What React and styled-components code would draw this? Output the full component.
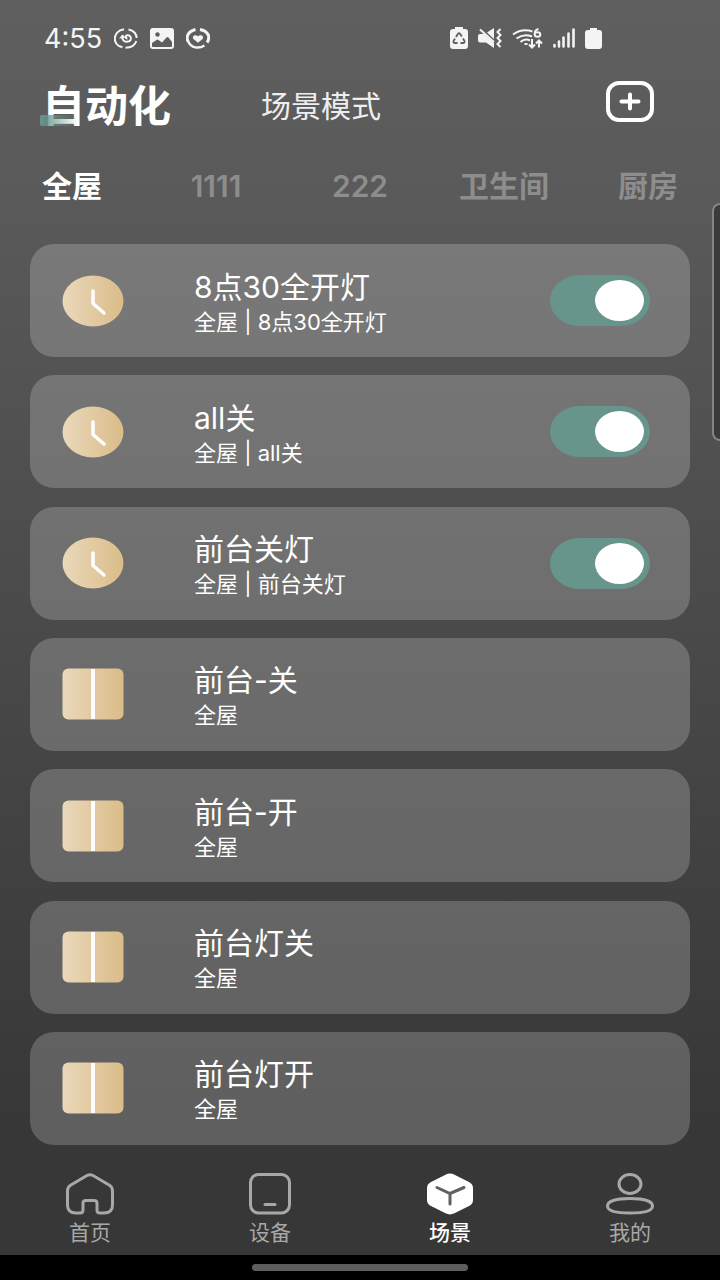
import React, { useState } from 'react';
import styled, { createGlobalStyle } from 'styled-components';

const rooms = ['全屋', '1111', '222', '卫生间', '厨房'];

const scenes = [
  { id: 1, name: '8点30全开灯', detail: '全屋 | 8点30全开灯', timed: true },
  { id: 2, name: 'all关', detail: '全屋 | all关', timed: true },
  { id: 3, name: '前台关灯', detail: '全屋 | 前台关灯', timed: true },
  { id: 4, name: '前台-关', detail: '全屋' },
  { id: 5, name: '前台-开', detail: '全屋' },
  { id: 6, name: '前台灯关', detail: '全屋' },
  { id: 7, name: '前台灯开', detail: '全屋' },
];

const IcHome = () => (
  <svg width='48' height='42' viewBox='0 0 48 42' fill='none' stroke='currentColor' strokeWidth='3'>
    <path d='M21 2.5Q24 .8 27 2.5L43.5 12.2Q46.5 14 46.5 18V32Q46.5 40 38 40H34Q31 40 31 37V30Q31 27.5 28 27.5H20Q17 27.5 17 30V37Q17 40 14 40H10Q1.5 40 1.5 32V18Q1.5 14 4.5 12.2Z' />
  </svg>
);

const IcDevice = () => (
  <svg width='42' height='42' viewBox='0 0 42 42' fill='none' stroke='currentColor' strokeWidth='3'>
    <rect x='1.5' y='1.5' width='39' height='38.5' rx='8' />
    <path d='M16 31.5H26' strokeLinecap='round' />
  </svg>
);

const IcScene = () => (
  <svg width='46' height='42' viewBox='0 0 46 42' fill='none'>
    <path
      d='M18.5 1.7Q23-.5 27.5 1.7L42 9Q46 11 46 15V27Q46 31 42 33L27.5 40.3Q23 42.5 18.5 40.3L4 33Q0 31 0 27V15Q0 11 4 9Z'
      fill='currentColor'
    />
    <path d='M10 14.5L23 20.5L37 14.5M23 20.5V31' stroke='#606060' strokeWidth='3' strokeLinecap='round' />
  </svg>
);

const IcMine = () => (
  <svg width='48' height='42' viewBox='0 0 48 42' fill='none' stroke='currentColor' strokeWidth='3'>
    <ellipse cx='24' cy='11' rx='11' ry='9.5' />
    <path d='M24 25.5C37 25.5 46.5 28 46.5 33S37 40 24 40S1.5 38 1.5 33S11 25.5 24 25.5Z' />
  </svg>
);

const menus = [
  { label: '首页', Icon: IcHome },
  { label: '设备', Icon: IcDevice },
  { label: '场景', Icon: IcScene },
  { label: '我的', Icon: IcMine },
];

const StatusBar = () => (
  <StStatusBar>
    <StTime>4:55</StTime>
    <svg width='24' height='21' viewBox='0 0 24 21' fill='none' stroke='currentColor' strokeWidth='2'>
      <path d='M10 1.3C-2 3.5-2 17 8.5 19.3M14.5 1.4C19.5 2.5 22.5 6 22.7 10M11.5 19.7C17 19.7 21 17.5 22.3 13' />
      <path d='M8.5 7.5C8 11.5 9.5 14 13 13.8C18.5 13.3 17.8 7 13.5 7.3C10.8 7.7 11 10.5 13.5 10.5' />
      <path d='M5 10.5L8.5 6.5L11.5 9.5Z' fill='currentColor' stroke='none' />
    </svg>
    <svg width='24' height='21' viewBox='0 0 24 21'>
      <path
        fill='currentColor'
        fillRule='evenodd'
        d='M3 0H21Q24 0 24 3V18Q24 21 21 21H3Q0 21 0 18V3Q0 0 3 0ZM2 15V18Q2 19 3 19H21Q22 19 22 18V14L18.5 9.5Q17.5 8.5 16.5 9.5L12 14.5L8.5 12Q7.5 11.2 6.5 12Z'
      />
      <circle cx='7.5' cy='6.5' r='2.2' fill='#5e5e5e' />
    </svg>
    <svg width='24' height='21' viewBox='0 0 24 21' fill='none' stroke='currentColor'>
      <path d='M9.5 1.5C1.5 3.5 0 9 2 13.5M14 1.5C22 3 25 9 21 14.5' strokeWidth='3' />
      <path d='M2 13C5 20.5 13 21 18.5 17.5' strokeWidth='2.5' />
      <path
        d='M12 14.8L7.5 11C5.5 8.5 9 5.5 12 8.2C15 5.5 18.5 8.5 16.5 11Z'
        fill='currentColor'
        stroke='none'
      />
    </svg>
    <StSystemIcons>
      <svg width='18' height='22' viewBox='0 0 18 22'>
        <path d='M5 0H13V2H15Q18 2 18 5V19Q18 22 15 22H3Q0 22 0 19V5Q0 2 3 2H5Z' fill='currentColor' />
        <path
          d='M6 10L8 6.8Q9 5.5 10 6.8L11.8 9.5M13 11.5L14.5 14Q15 16 13 16H10.5M7.5 16H5Q3 16 3.5 14L5 11.5'
          fill='none'
          stroke='#5e5e5e'
          strokeWidth='1.8'
        />
      </svg>
      <svg width='24' height='21' viewBox='0 0 24 21' fill='none' stroke='currentColor' strokeWidth='2'>
        <path d='M2 6H6L16 15V20L8 14.5H2Q0 14.5 0 12.5V8Q0 6 2 6ZM9 4.5L16 0V11Z' fill='currentColor' stroke='none' />
        <path d='M2 1.5L16 14' />
        <path d='M22.5 1L19.5 4L22.5 7L19.5 10L22.5 13L19.5 16L22.5 19' />
      </svg>
      <svg width='31' height='21' viewBox='0 0 31 21' fill='none' stroke='currentColor' strokeWidth='2'>
        <path d='M1 6.5Q10 0 20.5 3.5M4.5 10.5Q12 5 20 8.5M8.5 14Q13 10 18 12.5M12.5 16H15.5' />
        <ellipse cx='25.5' cy='6.5' rx='2.8' ry='2.3' />
        <path d='M22.7 6C22.7 3.5 24 1.5 26.5 1' />
        <path d='M20 11V19.5M17 16.5L20 19.5L23 16.5M27 19.5V12.5M24 15.5L27 12.5L30 15.5' />
      </svg>
      <svg width='22' height='20' viewBox='0 0 22 20' stroke='currentColor' strokeWidth='2.6' strokeLinecap='round'>
        <path d='M1.5 17V18.5M6 13.5V18.5M10.5 9.5V18.5M15.5 5.5V18.5M20.5 1.5V18.5' />
      </svg>
      <svg width='17' height='21' viewBox='0 0 17 21' fill='currentColor'>
        <path d='M5 0H12V2H14Q17 2 17 5V18Q17 21 14 21H3Q0 21 0 18V5Q0 2 3 2H5Z' />
      </svg>
    </StSystemIcons>
  </StStatusBar>
);

const SceneIcon = ({ timed }) => (
  <svg width='62' height='52' viewBox='0 0 62 52'>
    <defs>
      <linearGradient id='sand'>
        <stop stopColor='#ead8bb' />
        <stop offset='1' stopColor='#dabc88' />
      </linearGradient>
    </defs>
    {timed ? (
      <>
        <ellipse cx='31' cy='26' rx='30.5' ry='25.5' fill='url(#sand)' />
        <path
          d='M31 16V28.5L42 38'
          fill='none'
          stroke='#fff'
          strokeWidth='3.5'
          strokeLinecap='round'
          strokeLinejoin='round'
        />
      </>
    ) : (
      <>
        <rect x='.5' y='.5' width='61' height='51' rx='6' fill='url(#sand)' />
        <path d='M31 1V51' stroke='#fff' strokeWidth='4' />
      </>
    )}
  </svg>
);

const App = () => {
  const [activeRoom, setActiveRoom] = useState('全屋');
  const [enabledIds, setEnabledIds] = useState([1, 2, 3]);

  const handleToggle = (id) => {
    setEnabledIds((prev) => (prev.includes(id) ? prev.filter((v) => v !== id) : [...prev, id]));
  };

  return (
    <StPage>
      <GlobalStyle />
      <StScreen>
        <StatusBar />
        <StHeader>
          <StModeBtn type='button' $active>
            自动化
          </StModeBtn>
          <StModeBtn type='button'>场景模式</StModeBtn>
          <StAddBtn type='button' aria-label='添加'>
            <svg width='48' height='41' viewBox='0 0 48 41' fill='none' stroke='currentColor' strokeWidth='4'>
              <rect x='2' y='2' width='44' height='37' rx='11' />
              <path d='M15.5 20.5H32.5M24 13.5V27.5' strokeLinecap='round' />
            </svg>
          </StAddBtn>
        </StHeader>

        <StRooms>
          {rooms.map((room) => (
            <StRoom key={room} type='button' $active={room === activeRoom} onClick={() => setActiveRoom(room)}>
              {room}
            </StRoom>
          ))}
        </StRooms>

        <StSceneList>
          {scenes.map(({ id, name, detail, timed }) => (
            <StScene key={id}>
              <SceneIcon timed={timed} />
              <StSceneInfo>
                <StSceneName>{name}</StSceneName>
                <StSceneDetail>{detail}</StSceneDetail>
              </StSceneInfo>
              {timed && (
                <StSwitch
                  type='checkbox'
                  role='switch'
                  aria-label={name}
                  checked={enabledIds.includes(id)}
                  onChange={() => handleToggle(id)}
                />
              )}
            </StScene>
          ))}
        </StSceneList>

        <StNav>
          {menus.map(({ label, Icon }) => (
            <StNavLink key={label} href='#' $active={label === '场景'}>
              <Icon />
              {label}
            </StNavLink>
          ))}
        </StNav>
        <StEdgePanel />
      </StScreen>
      <StGestureBar>
        <StGestureHandle />
      </StGestureBar>
    </StPage>
  );
};

export default App;

const GlobalStyle = createGlobalStyle`
  * {
    box-sizing: border-box;
  }

  body {
    margin: 0;
    background-color: #000000;
    font-family: Inter, 'Noto Sans CJK SC', sans-serif;
    color: #ffffff;
  }

  button {
    padding: 0;
    border: none;
    background: none;
    font-family: inherit;
    color: inherit;
    cursor: pointer;
  }

  svg {
    display: block;
    flex-shrink: 0;
  }
`;

const StPage = styled.div`
  display: flex;
  flex-direction: column;
  min-height: 100vh;
`;

const StScreen = styled.main`
  display: flex;
  flex: 1;
  flex-direction: column;
  position: relative;
  background: linear-gradient(#5f5f5f, #5a5a5a 15%, #373737 90%);
`;

const StStatusBar = styled.div`
  display: flex;
  align-items: center;
  gap: 12px;
  height: 76px;
  padding: 0 118px 0 44px;
  color: #f4f4f4;
`;

const StTime = styled.span`
  font-size: 27px;
`;

const StSystemIcons = styled.div`
  display: flex;
  align-items: center;
  gap: 10px;
  margin-left: auto;
`;

const StHeader = styled.header`
  display: flex;
  align-items: center;
  gap: 90px;
  height: 60px;
  padding: 0 66px 0 42px;
`;

const StModeBtn = styled.button`
  position: relative;
  font-size: ${(props) => (props.$active ? '43px' : '30px')};
  font-weight: ${(props) => (props.$active ? 700 : 400)};
  line-height: 60px;
  color: ${(props) => (props.$active ? '#ffffff' : '#eeeeee')};

  &::before {
    content: '';
    display: ${(props) => (props.$active ? 'block' : 'none')};
    position: absolute;
    bottom: 10px;
    left: -2px;
    width: 38px;
    height: 11px;
    border-radius: 2px;
    background: linear-gradient(90deg, #67948b, transparent);
  }
`;

const StAddBtn = styled.button`
  align-self: flex-start;
  margin-top: 5px;
  margin-left: auto;
`;

const StRooms = styled.nav`
  display: grid;
  grid-template-columns: repeat(5, 1fr);
  height: 108px;
  padding-top: 30px;
`;

const StRoom = styled.button`
  align-self: flex-start;
  font-size: 30px;
  font-weight: ${(props) => (props.$active ? 700 : 600)};
  line-height: 40px;
  color: ${(props) => (props.$active ? '#ffffff' : '#8d8d8d')};
`;

const StSceneList = styled.ul`
  display: flex;
  flex: 1;
  flex-direction: column;
  justify-content: space-between;
  gap: 16px;
  margin: 0;
  padding: 0 30px;
  list-style: none;
`;

const StScene = styled.li`
  display: flex;
  align-items: center;
  gap: 70px;
  height: 113px;
  padding: 0 40px 0 32px;
  border-radius: 24px;
  background-color: rgba(255, 255, 255, 0.2);
`;

const StSceneInfo = styled.div`
  flex: 1;
  padding-top: 4px;
`;

const StSceneName = styled.p`
  margin: 0;
  font-size: 30px;
  line-height: 38px;
`;

const StSceneDetail = styled.p`
  margin: 0;
  font-size: 22px;
  line-height: 32px;
`;

const StSwitch = styled.input`
  flex-shrink: 0;
  width: 100px;
  height: 51px;
  margin: 0;
  padding: 5px 6px;
  border-radius: 30px / 26px;
  background-color: ${(props) => (props.checked ? '#67948b' : '#8d8d8d')};
  appearance: none;
  cursor: pointer;

  &::before {
    content: '';
    display: block;
    width: 49px;
    height: 41px;
    margin-left: ${(props) => (props.checked ? 'auto' : '0')};
    border-radius: 50%;
    background-color: #ffffff;
  }
`;

const StNav = styled.nav`
  display: grid;
  grid-template-columns: repeat(4, 1fr);
  padding: 28px 0 8px;
`;

const StNavLink = styled.a`
  display: flex;
  flex-direction: column;
  align-items: center;
  gap: 4px;
  font-size: 21px;
  font-weight: ${(props) => (props.$active ? 500 : 400)};
  line-height: 28px;
  color: ${(props) => (props.$active ? '#ffffff' : '#a8a8a8')};
  text-decoration: none;
`;

const StEdgePanel = styled.div`
  position: absolute;
  top: 203px;
  right: 0;
  width: 8px;
  height: 238px;
  border: 2px solid #858585;
  border-right: none;
  border-radius: 8px 0 0 8px;
  background-color: #3b3b3a;
`;

const StGestureBar = styled.div`
  display: flex;
  justify-content: center;
  height: 25px;
  padding-top: 9px;
  background-color: #000000;
`;

const StGestureHandle = styled.div`
  width: 30%;
  height: 7px;
  border-radius: 4px;
  background-color: #5d5d5d;
`;
